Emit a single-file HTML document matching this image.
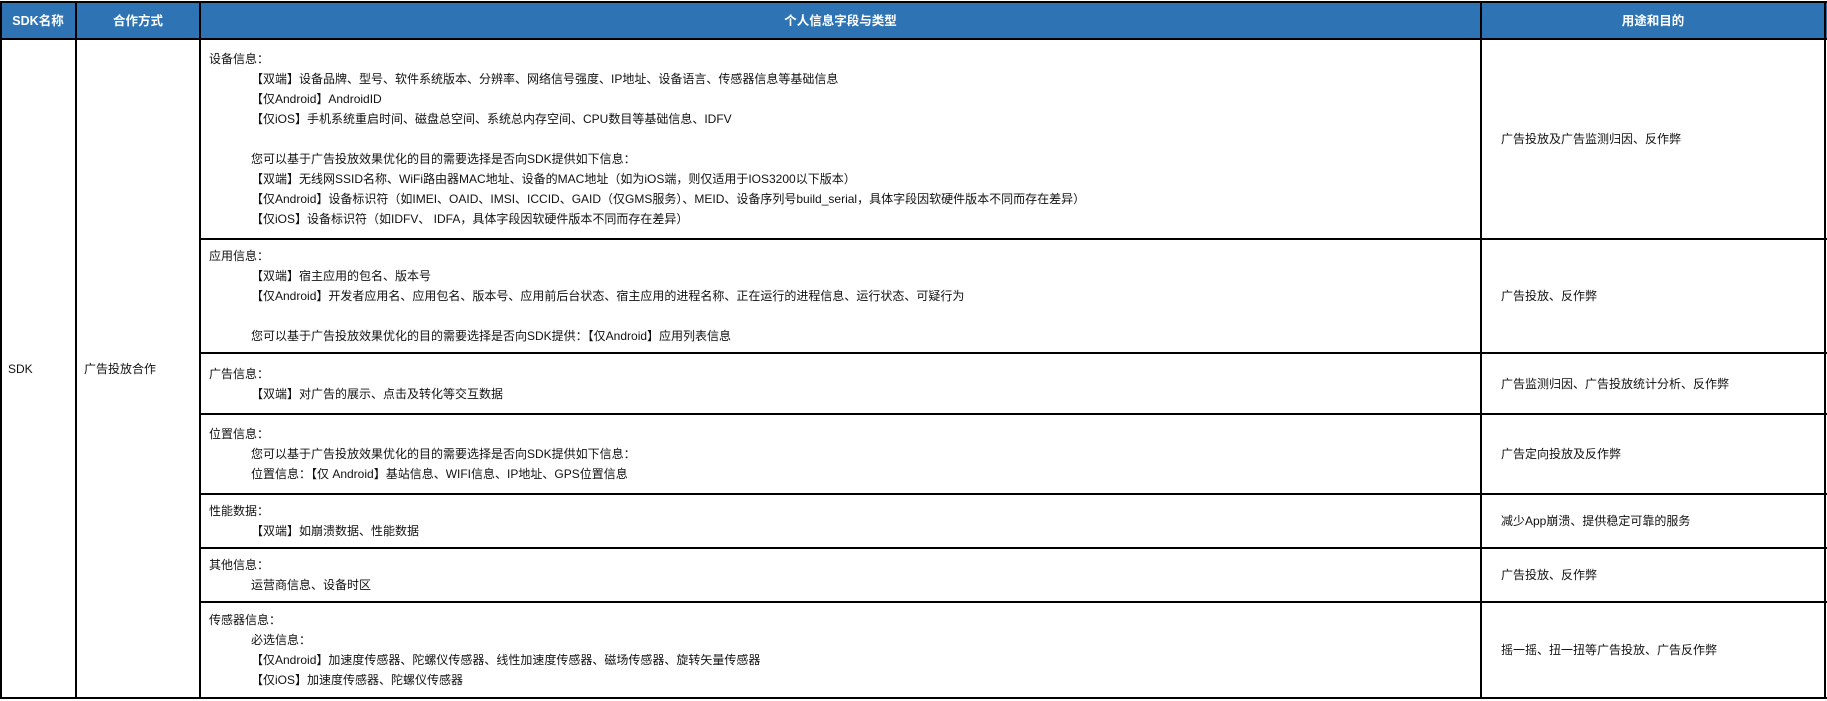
<!DOCTYPE html>
<html><head><meta charset="utf-8"><style>
*{margin:0;padding:0;box-sizing:border-box}
body{width:1827px;height:701px;background:#fff;position:relative;overflow:hidden;font-family:"Liberation Sans","Noto Sans CJK SC",sans-serif;font-size:12px;color:#111}
.hd{position:absolute;top:3px;height:36px;background:#2e74b5}
.ht{position:absolute;top:3px;height:36px;line-height:36px;color:#fff;font-weight:bold;font-size:12.5px;text-align:center}
.v{position:absolute;width:2px;background:#000}
.h{position:absolute;height:2px;background:#000}
.c{position:absolute;display:flex;flex-direction:column;justify-content:center;line-height:20px;white-space:nowrap}
.i{padding-left:42px}
</style></head><body>
<div class="hd" style="left:0;width:1827px"></div>
<div class="ht" style="left:0;width:76px">SDK名称</div>
<div class="ht" style="left:76px;width:124px">合作方式</div>
<div class="ht" style="left:200px;width:1281px">个人信息字段与类型</div>
<div class="ht" style="left:1481px;width:344px">用途和目的</div>

<div class="h" style="left:0;width:1827px;top:1px"></div>
<div class="h" style="left:0;width:1827px;top:38px"></div>
<div class="h" style="left:200px;width:1627px;top:238px"></div>
<div class="h" style="left:200px;width:1627px;top:352px"></div>
<div class="h" style="left:200px;width:1627px;top:413px"></div>
<div class="h" style="left:200px;width:1627px;top:493px"></div>
<div class="h" style="left:200px;width:1627px;top:547px"></div>
<div class="h" style="left:200px;width:1627px;top:601px"></div>
<div class="h" style="left:0;width:1827px;top:697px"></div>
<div class="v" style="left:0;top:1px;height:698px"></div>
<div class="v" style="left:75px;top:1px;height:698px"></div>
<div class="v" style="left:199px;top:1px;height:698px"></div>
<div class="v" style="left:1480px;top:1px;height:698px"></div>
<div class="v" style="left:1824px;top:1px;height:698px"></div>

<div class="c" style="left:8px;top:40px;height:658px">SDK</div>
<div class="c" style="left:84px;top:40px;height:658px">广告投放合作</div>

<div class="c" style="left:209px;top:40px;height:198px">
<div>设备信息：</div>
<div class="i">【双端】设备品牌、型号、软件系统版本、分辨率、网络信号强度、IP地址、设备语言、传感器信息等基础信息</div>
<div class="i">【仅Android】AndroidID</div>
<div class="i">【仅iOS】手机系统重启时间、磁盘总空间、系统总内存空间、CPU数目等基础信息、IDFV</div>
<div>&nbsp;</div>
<div class="i">您可以基于广告投放效果优化的目的需要选择是否向SDK提供如下信息：</div>
<div class="i">【双端】无线网SSID名称、WiFi路由器MAC地址、设备的MAC地址（如为iOS端，则仅适用于IOS3200以下版本）</div>
<div class="i">【仅Android】设备标识符（如IMEI、OAID、IMSI、ICCID、GAID（仅GMS服务）、MEID、设备序列号build_serial，具体字段因软硬件版本不同而存在差异）</div>
<div class="i">【仅iOS】设备标识符（如IDFV、 IDFA，具体字段因软硬件版本不同而存在差异）</div>
</div>
<div class="c" style="left:1501px;top:40px;height:198px">广告投放及广告监测归因、反作弊</div>

<div class="c" style="left:209px;top:240px;height:112px">
<div>应用信息：</div>
<div class="i">【双端】宿主应用的包名、版本号</div>
<div class="i">【仅Android】开发者应用名、应用包名、版本号、应用前后台状态、宿主应用的进程名称、正在运行的进程信息、运行状态、可疑行为</div>
<div>&nbsp;</div>
<div class="i">您可以基于广告投放效果优化的目的需要选择是否向SDK提供：【仅Android】应用列表信息</div>
</div>
<div class="c" style="left:1501px;top:240px;height:112px">广告投放、反作弊</div>

<div class="c" style="left:209px;top:354px;height:59px">
<div>广告信息：</div>
<div class="i">【双端】对广告的展示、点击及转化等交互数据</div>
</div>
<div class="c" style="left:1501px;top:354px;height:59px">广告监测归因、广告投放统计分析、反作弊</div>

<div class="c" style="left:209px;top:415px;height:78px">
<div>位置信息：</div>
<div class="i">您可以基于广告投放效果优化的目的需要选择是否向SDK提供如下信息：</div>
<div class="i">位置信息：【仅 Android】基站信息、WIFI信息、IP地址、GPS位置信息</div>
</div>
<div class="c" style="left:1501px;top:415px;height:78px">广告定向投放及反作弊</div>

<div class="c" style="left:209px;top:495px;height:52px">
<div>性能数据：</div>
<div class="i">【双端】如崩溃数据、性能数据</div>
</div>
<div class="c" style="left:1501px;top:495px;height:52px">减少App崩溃、提供稳定可靠的服务</div>

<div class="c" style="left:209px;top:549px;height:52px">
<div>其他信息：</div>
<div class="i">运营商信息、设备时区</div>
</div>
<div class="c" style="left:1501px;top:549px;height:52px">广告投放、反作弊</div>

<div class="c" style="left:209px;top:603px;height:94px">
<div>传感器信息：</div>
<div class="i">必选信息：</div>
<div class="i">【仅Android】加速度传感器、陀螺仪传感器、线性加速度传感器、磁场传感器、旋转矢量传感器</div>
<div class="i">【仅iOS】加速度传感器、陀螺仪传感器</div>
</div>
<div class="c" style="left:1501px;top:603px;height:94px">摇一摇、扭一扭等广告投放、广告反作弊</div>
</body></html>
